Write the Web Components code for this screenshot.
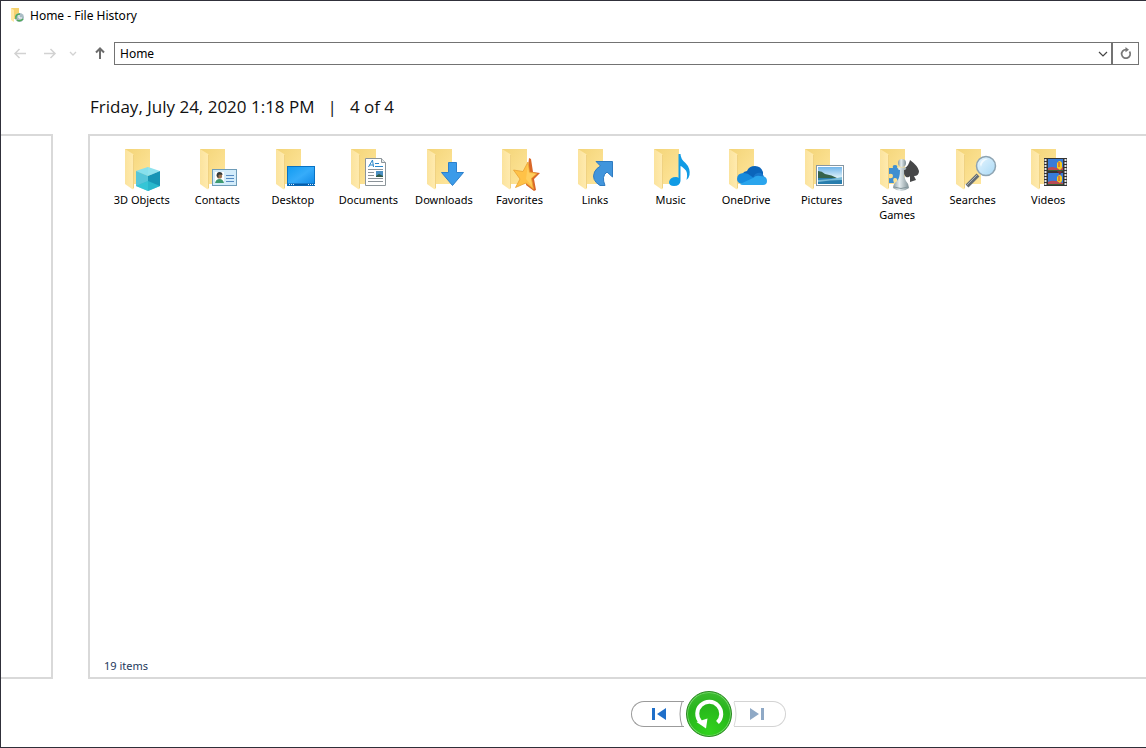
<!DOCTYPE html>
<html lang="en">
<head>
<meta charset="utf-8">
<meta name="viewport" content="width=device-width, initial-scale=1">
<title>Home - File History</title>
<style>
html, body { margin: 0; height: 100%; background: #fff; }
body { font: 12px/15px "Noto Sans", "Open Sans", sans-serif; color: #000; overflow: hidden; }
</style>
</head>
<body>
<history-window></history-window>

<script>
const define = (name, html, setup) => {
  const template = document.createElement('template');
  template.innerHTML = html;
  customElements.define(name, class extends HTMLElement {
    connectedCallback() {
      if (this.shadowRoot) return;
      this.attachShadow({ mode: 'open' }).append(template.content.cloneNode(true));
      if (setup) setup(this, this.shadowRoot);
    }
  });
};

/* Artwork laid over the folder, in a 48 x 48 box */
const ART = {
  objects: `<path d="M30 22 42 26 30 31 18 26Z" fill="#8fe3ee"/><path d="M18 26 30 31V46L18 41Z" fill="#35b4cc"/><path d="M42 26 30 31V46L42 41Z" fill="#1795b5"/><path d="M18 26 30 22V36L18 41Z" fill="#7fdcea" opacity=".45"/><path d="M18 41 30 36 42 41 30 46Z" fill="#35d0dc" opacity=".6"/>`,
  contacts: `<rect x="19.500" y="24.500" width="24" height="16" fill="#d3ecfa" stroke="#6e9cb8"/><rect x="22" y="27" width="9" height="11" fill="#fff"/><path d="M22 38q1-4 4.500-4t4.500 4Z" fill="#3d9a70"/><circle cx="26.500" cy="31" r="2.600" fill="#9b7350"/><path d="M23.500 31q0-4 3-4 3 0 3 3-3-1-4 0v3Z" fill="#353a39"/><path d="M33 30.500h8M33 33.500h8M33 36.500h8" stroke="#568ac2"/>`,
  desktop: `<rect x="18.500" y="21.500" width="27" height="19" fill="url(#desk)" stroke="#0872c4"/><path d="M19 39.500h27" stroke="#075ca8" stroke-width="2"/><path d="M20 39.500h5M39 39.500h7" stroke="#d8efff" stroke-dasharray="1 1"/>`,
  documents: `<path d="M21.500 13.500h16l4 4v23h-20Z" fill="#fff" stroke="#8c959a"/><path d="M37.500 13.500v4h4" fill="#e4e8ea" stroke="#8c959a"/><path d="m24.500 22 4-7 1 7m-4-2h4M31 18.500h4M31 21.500h8" stroke="#2986ca" fill="none"/><path d="M24 24.500h15M24 27.500h6M24 30.500h6M24 33.500h15M24 36.500h15" stroke="#8b9399"/><path d="M32 26h7v6h-7Z" fill="#4c91c3"/><path d="m32 31 3-2 4 2v1h-7Z" fill="#315b48"/>`,
  downloads: `<path d="M28.500 17.500h8v10h7L32.500 40.500 21.500 27.500h7Z" fill="#3b9be9" stroke="#2c80cc"/>`,
  favorites: `<path d="M34 13 36 14 38 27 45 28 39 34 41 45 39 46 31 40Z" fill="#d96728"/><path d="M33 17 34.500 27 42 28.500 36.500 33.500 38.500 44 31 38 20.500 42.500 25 34 18.500 25 28 26.500Z" fill="#ffc247" stroke="#e9a234" stroke-width=".8"/><path d="M33 19 34 28 41 29 36 33 37 41 31 34Z" fill="#ffdc78" opacity=".5"/>`,
  links: `<path d="M25 16.500h16.500V32L36 27q-6 4-2 13.500H29Q20 35 23.500 27 25.500 23 29.500 21Z" fill="#4195dc" stroke="#2e7bc1"/>`,
  music: `<path d="M31.500 9h2q0 5 5 9 5 5 4 12-1 4-3 5 2-8-2-11-3-3-4-3v15Q33 41 27 41 22 41 22 37q1-5 7-5 2 0 2.500 1Z" fill="#109be5"/>`,
  onedrive: `<path d="M20 33q-1-6 5-7 2-5 8-5 6 0 8 6v8H20Z" fill="#0b65bb"/><path d="M22 39q-7 0-7-5 0-6 7-6 4 0 7 3l11 8Z" fill="#168bdd"/><path d="M31 33q2-6 8-5 3 2 3 4-3 3-11 1Z" fill="#1877cc"/><path d="M18 39 31 33q3-3 7-2 7 0 7 5 0 4-4 4H21q-2 0-3-1Z" fill="#2aa5ed"/>`,
  pictures: `<rect x="18.500" y="20.500" width="27" height="20" fill="#fff" stroke="#8797a2"/><path d="M20 22h24v17H20Z" fill="url(#sky)"/><path d="M20 26q4 0 7 3 7 1 12 4H20Z" fill="#36634c"/><path d="M20 33h24v6H20Z" fill="#287dad"/><path d="M20 35q12 0 24-3v3q-12 0-24 2Z" fill="#7bbbd8"/>`,
  games: `<path d="M16 23h4q-1-3 2-3t2 3h4v14h-4q1-4-2-4t-1 5h-5v-5q4 1 4-2t-4-2Z" fill="#3f8fd0"/><path d="M37 15q-1 5-5 8-3 6 1 9 3 1 4-1l0 6 6-2-2-4q5 0 5-5-1-5-9-11Z" fill="#464748"/><circle cx="29" cy="18" r="4" fill="url(#pawn)"/><path d="M25 22.500h8q1 2-2 2.500 0 8 2 11 3 3 3 7-8 6-16 0 0-4 4-7 3-3 3-11-3-.5-2-2.500Z" fill="url(#pawn)"/><path d="M21 42q7 3 14 0" fill="none" stroke="#84969c"/>`,
  searches: `<path d="m29 30-11 11" stroke="#666d73" stroke-width="4"/><path d="m28 30-10 10" stroke="#aab0b5"/><circle cx="37" cy="21" r="9.500" fill="url(#lens)" stroke="#8ea4b2" stroke-width="1.500"/><path d="M31 19q2-6 8-5-6 2-7 8Z" fill="#fff" opacity=".7"/>`,
  videos: `<path d="M20 13h23v28H20Z" fill="#343434"/><path d="M21.500 14v27M41.500 14v27" stroke="#e5e5e5" stroke-width="2" stroke-dasharray="2 1"/><path d="M24 14h15v12H24ZM24 28h15v12H24Z" fill="#387bd9"/><path d="M24 23q4-2 8 0l7-1v4H24ZM24 37q5-3 15 1v2H24Z" fill="#b94b55"/><path d="M24 25h15v1H24ZM24 39h15v1H24Z" fill="#3d5f35"/><path d="M33 18q3-4 5 0v5l-2 2-3-2ZM33 32q3-4 5 0v4l-2 2-3-2Z" fill="#f5ca21"/><path d="M35 17v5M35 31v5" stroke="#c93838"/><path d="M33 26h5l-2 4Z" fill="#7b2d35"/>`
};

define('folder-tile', `
<style>
:host { display: block; min-width: 0; }
a { display: flex; flex-direction: column; align-items: center; color: inherit; text-decoration: none; text-align: center; }
svg { width: 48px; height: 47px; flex: none; overflow: visible; }
span { max-width: 64px; }
</style>
<a href="#"><svg viewBox="0 0 48 47" aria-hidden="true">
<defs>
<linearGradient id="back" x2="1" y2="1"><stop stop-color="#f3d477"/><stop offset="1" stop-color="#ffe69d"/></linearGradient>
<linearGradient id="flap"><stop stop-color="#fbe39d"/><stop offset="1" stop-color="#ffebb0"/></linearGradient>
<linearGradient id="desk" x2="1" y2="1"><stop stop-color="#119bf0"/><stop offset=".5" stop-color="#36acfa"/><stop offset="1" stop-color="#0d87e6"/></linearGradient>
<linearGradient id="sky" x2="0" y2="1"><stop stop-color="#70b5ea"/><stop offset=".65" stop-color="#e3f3fa"/></linearGradient>
<linearGradient id="pawn"><stop stop-color="#8b9ca1"/><stop offset=".4" stop-color="#e5edef"/><stop offset="1" stop-color="#7e8f95"/></linearGradient>
<linearGradient id="lens" x2="1" y2="1"><stop stop-color="#e8f6ff"/><stop offset="1" stop-color="#a9d9f5"/></linearGradient>
</defs>
<path d="M7 4h25v35H7Z" fill="url(#back)"/><path d="M7 4 15 9q1 1 1 3v31q0 2-2 1L7 39Z" fill="url(#flap)"/><path d="M15.500 10v33" stroke="#e9c76e" stroke-width=".7"/>
<g id="art"></g></svg><span><slot></slot></span></a>`,
(host, root) => { root.querySelector('#art').innerHTML = ART[host.getAttribute('kind')]; });

define('title-bar', `
<style>
:host { display: flex; align-items: center; gap: 5px; height: 28px; padding-left: 8px; }
svg { width: 16px; height: 16px; }
h1 { margin: 0; font: inherit; }
</style>
<svg viewBox="0 0 16 16" aria-hidden="true"><path d="M2 1h8v11H2Z" fill="#f5d26d"/><path d="m2 1 3 2v12l-3-2Z" fill="#ffe7a3"/><circle cx="10.500" cy="10.500" r="4.500" fill="#a9bcc5"/><path d="M7 12q-1-5 4-5M8 13q3 2 6-1" fill="none" stroke="#4faa59" stroke-width="1.500"/><path d="M10 8v3h3" fill="none" stroke="#fff"/></svg>
<h1><slot></slot></h1>`);

define('address-bar', `
<style>
:host { display: flex; align-items: center; height: 23px; padding: 0 7px 0 10px; }
button { border: 0; padding: 0; background: none; display: flex; align-items: center; justify-content: center; }
svg { fill: none; stroke: currentColor; }
.nav { height: 23px; color: #d2d2d2; width: 18px; }
.forward { margin-left: 12px; }
.recent { margin-left: 6px; width: 16px; }
.up { margin-left: 10px; width: 18px; color: #6c6c6c; }
form { flex: 1; display: flex; height: 23px; margin-left: 5px; }
.box { flex: 1; display: flex; border: 1px solid #737373; box-sizing: border-box; }
input { flex: 1; min-width: 0; border: 0; outline: 0; padding: 0 5px 1px; background: none; font: inherit; color: inherit; }
.drop { width: 16px; color: #444; }
.refresh { width: 27px; box-sizing: border-box; border: 1px solid #737373; color: #777; }
</style>
<button class="nav" aria-label="Back"><svg width="14" height="12" stroke-width="1.500"><path d="M13 5.500H2M6.500 1 2 5.500 6.500 10"/></svg></button>
<button class="nav forward" aria-label="Forward"><svg width="14" height="12" stroke-width="1.500"><path d="M1 5.500h11M7.500 1 12 5.500 7.500 10"/></svg></button>
<button class="nav recent" aria-label="Recent locations"><svg width="8" height="6" stroke-width="1.300"><path d="m1 1 3 3 3-3"/></svg></button>
<button class="nav up" aria-label="Up"><svg width="12" height="14" stroke-width="2"><path d="M6 12V1.500M2 5.500l4-4 4 4"/></svg></button>
<form><div class="box"><input aria-label="Address" value="Home" spellcheck="false"><button type="button" class="drop" aria-label="Previous locations"><svg width="10" height="6" stroke-width="1.200"><path d="m1 1 4 4 4-4"/></svg></button></div>
<button type="button" class="refresh" aria-label="Refresh"><svg width="12" height="14" stroke-width="1.700"><path d="M9.500 4.500A4.300 4.300 0 1 1 6 2.600"/><path d="M5.500 0 9 2.700 5.500 5.200Z" fill="currentColor" stroke="none"/></svg></button></form>`);

define('version-heading', `
<style>
:host { display: block; padding-left: 89px; }
h2 { margin: 0; font: 17px/24px "Open Sans", "Noto Sans", sans-serif; display: flex; gap: 13px; color: #111; }
</style>
<h2><slot name="date"></slot><span>|</span><slot name="count"></slot></h2>`);

define('version-panel', `
<style>
:host { display: flex; flex-direction: column; box-sizing: border-box; flex: 1; min-width: 0; border: 2px solid #d9d9d9; border-right: 0; padding: 9px 60px 4px 14px; font-size: 11px; }
.grid { flex: 1; display: grid; grid-template-columns: repeat(13, 1fr); align-content: start; }
p { margin: 0; color: #1e395b; }
</style>
<div class="grid"><slot></slot></div><p><slot name="status"></slot></p>`);

define('version-controls', `
<style>
:host { display: flex; justify-content: center; align-items: center; gap: 2px; height: 46px; padding-left: 269px; }
button { padding: 0; background: #fff; display: flex; align-items: center; justify-content: center; box-sizing: border-box; }
.step { width: 53px; height: 26px; border: 1px solid #9b9b9b; }
.prev { border-radius: 13px 0 0 13px; border-right: 0; color: #1f6fc9; }
.next { width: 52px; border-radius: 0 13px 13px 0; border-left: 0; border-color: #d3d3d3; color: #8fa9c6; }
.restore { width: 46px; height: 46px; border-radius: 50%; border: 1px solid #26861d; background: radial-gradient(circle at 50% 90%, #31d31d, #27b51b 60%, #48bf3c); box-shadow: inset 0 0 0 1px #73d568; }
svg { flex: none; }
</style>
<button class="step prev" aria-label="Previous version"><svg width="53" height="24"><path d="M21 6h3v12h-3ZM35 6v12l-9-6Z" fill="currentColor"/><path d="M51 0q-4 12 0 24" fill="none" stroke="#9b9b9b"/></svg></button>
<button class="restore" aria-label="Restore to original location"><svg width="32" height="32" fill="none"><path d="M24.500 24.500A12 12 0 1 0 7.500 24" stroke="#fff" stroke-width="4"/><path d="M3.500 24 14.500 20.500 13 30.500Z" fill="#fff"/></svg></button>
<button class="step next" aria-label="Next version" disabled><svg width="52" height="24"><path d="M17 6v12l9-6ZM28 6h3v12h-3Z" fill="currentColor"/><path d="M1 0q4 12 0 24" fill="none" stroke="#d9d9d9"/></svg></button>`);

define('history-window', `
<style>
:host { display: flex; flex-direction: column; box-sizing: border-box; height: 100vh; background: #fff; border: 1px solid #30303a; border-right: 0; }
address-bar { margin-top: 13px; }
version-heading { margin-top: 30px; }
main { flex: 1; min-height: 0; display: flex; gap: 35px; margin-top: 15px; }
.previous { width: 50px; border: 2px solid #d9d9d9; border-left: 0; }
version-controls { margin: 12px 0 10px; }
</style>
<title-bar>Home - File History</title-bar>
<address-bar></address-bar>
<version-heading><span slot="date">Friday, July 24, 2020 1:18 PM</span><span slot="count">4 of 4</span></version-heading>
<main><div class="previous"></div>
<version-panel>
<folder-tile kind="objects">3D Objects</folder-tile>
<folder-tile kind="contacts">Contacts</folder-tile>
<folder-tile kind="desktop">Desktop</folder-tile>
<folder-tile kind="documents">Documents</folder-tile>
<folder-tile kind="downloads">Downloads</folder-tile>
<folder-tile kind="favorites">Favorites</folder-tile>
<folder-tile kind="links">Links</folder-tile>
<folder-tile kind="music">Music</folder-tile>
<folder-tile kind="onedrive">OneDrive</folder-tile>
<folder-tile kind="pictures">Pictures</folder-tile>
<folder-tile kind="games">Saved Games</folder-tile>
<folder-tile kind="searches">Searches</folder-tile>
<folder-tile kind="videos">Videos</folder-tile>
<span slot="status">19 items</span>
</version-panel></main>
<version-controls></version-controls>`);
</script>
</body>
</html>
